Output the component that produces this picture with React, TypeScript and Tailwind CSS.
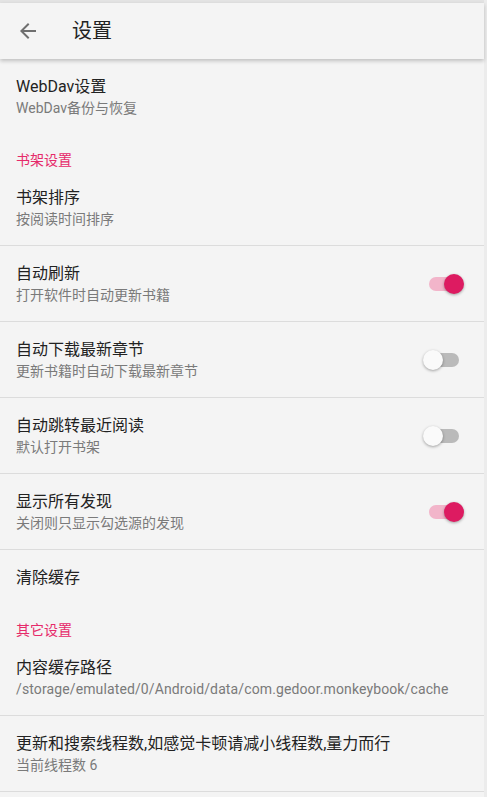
import React from "react"

const font = { fontFamily: 'Roboto, "Noto Sans CJK SC", sans-serif' }

interface ToggleProps {
  on: boolean
}

const Toggle: React.FC<ToggleProps> = ({ on }) => (
  <div className="relative w-[41px] h-[20px] shrink-0">
    <div className={`absolute left-[6px] top-[3px] w-[30px] h-[14px] rounded-full ${on ? "bg-[#f2b5ca]" : "bg-[#bababa]"}`} />
    <div
      className={`absolute top-0 w-[20px] h-[20px] rounded-full shadow-[0_1px_3px_rgba(0,0,0,0.35)] ${
        on ? "left-[21px] bg-[#dd1b61]" : "left-0 bg-[#fafafa]"
      }`}
    />
  </div>
)

interface RowProps {
  title: string
  summary?: string
  toggle?: boolean
  divider?: boolean
  wide?: boolean
}

const Row: React.FC<RowProps> = ({ title, summary, toggle, divider, wide }) => (
  <div className={`flex items-center pl-4 pr-5 ${summary ? "h-[76px]" : "h-[55px]"} ${divider ? "border-b border-[#dcdcdc]" : ""}`}>
    <div className="flex-1 min-w-0">
      <div className="text-[16px] leading-[22px] text-[#222222] whitespace-nowrap">{title}</div>
      {summary && (
        <div className={`text-[14px] leading-5 text-[#7a7a7a] whitespace-nowrap ${wide ? "tracking-[0.12px]" : ""}`}>{summary}</div>
      )}
    </div>
    {toggle !== undefined && <Toggle on={toggle} />}
  </div>
)

const Category: React.FC<{ label: string }> = ({ label }) => (
  <div className="h-[35px] pt-[15px] pl-4 text-[14px] leading-5 text-[#e62a6a]">{label}</div>
)

export default function App() {
  return (
    <div className="min-h-screen bg-[#ececec]" style={font}>
      <div className="w-[484px] min-h-screen bg-[#f4f4f4]">
        <div className="h-[3px] bg-[#e3e3e3]" />
        <div className="relative z-10 h-[56px] flex items-center bg-[#f4f4f4] shadow-[0_2px_4px_rgba(0,0,0,0.22)]">
          <div className="w-[72px] flex items-center pl-4">
            <svg width="24" height="24" viewBox="0 0 24 24" fill="#6f6f6f">
              <path d="M20 11H7.83l5.59-5.59L12 4l-8 8 8 8 1.41-1.41L7.83 13H20v-2z" />
            </svg>
          </div>
          <div className="text-[20px] leading-7 text-[#222222]">设置</div>
        </div>

        <Row title="WebDav设置" summary="WebDav备份与恢复" />
        <Category label="书架设置" />
        <Row title="书架排序" summary="按阅读时间排序" divider />
        <Row title="自动刷新" summary="打开软件时自动更新书籍" toggle={true} divider />
        <Row title="自动下载最新章节" summary="更新书籍时自动下载最新章节" toggle={false} divider />
        <Row title="自动跳转最近阅读" summary="默认打开书架" toggle={false} divider />
        <Row title="显示所有发现" summary="关闭则只显示勾选源的发现" toggle={true} divider />
        <Row title="清除缓存" />
        <Category label="其它设置" />
        <Row title="内容缓存路径" summary="/storage/emulated/0/Android/data/com.gedoor.monkeybook/cache" divider wide />
        <Row title="更新和搜索线程数,如感觉卡顿请减小线程数,量力而行" summary="当前线程数 6" divider />
      </div>
    </div>
  )
}
